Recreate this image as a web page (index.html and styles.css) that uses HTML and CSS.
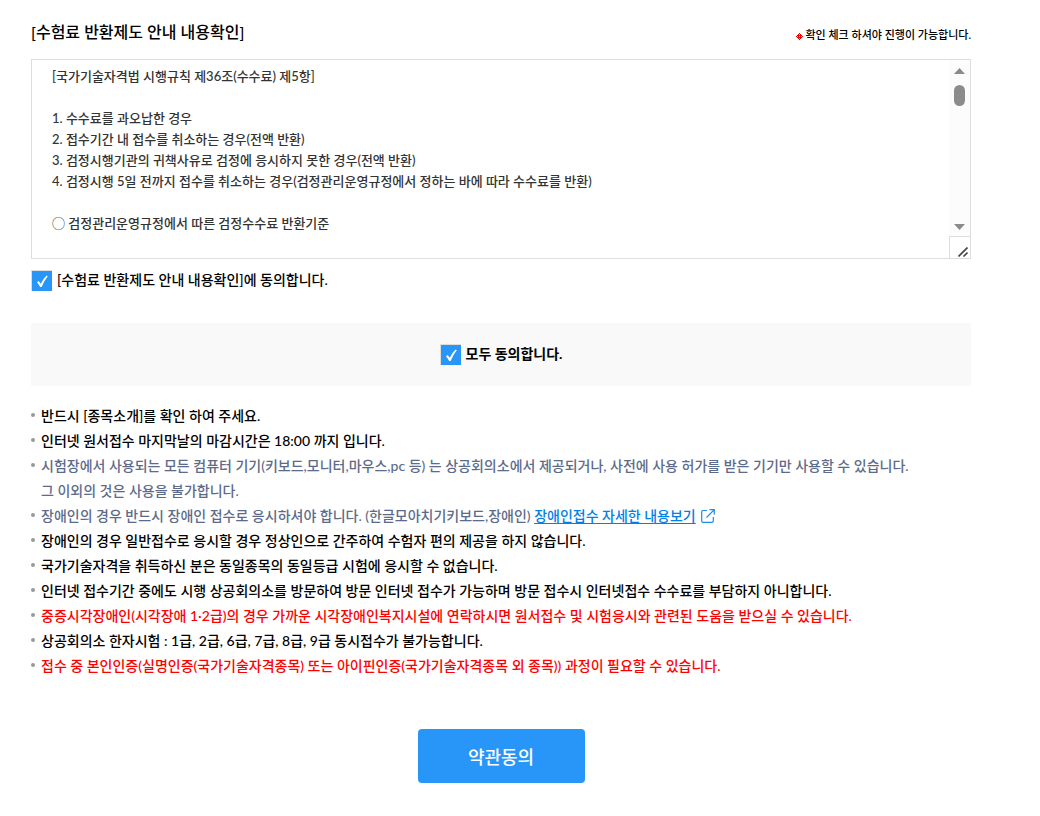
FILE: index.html
```html
<!DOCTYPE html>
<html lang="ko">
<head>
    <meta charset="UTF-8">
    <meta name="viewport" content="width=device-width, initial-scale=1.0">
    <title>약관동의</title>
    <link rel="stylesheet" href="styles.css">
</head>
<body>
    <form class="agree-form">
        <div class="title-row">
            <h1 id="refundTitle">[수험료 반환제도 안내 내용확인]</h1>
            <p class="title-note">
                <svg class="note-mark" width="7" height="7" viewBox="0 0 7 7" aria-hidden="true">
                    <path d="M3 0h1v1h1v1h1v1h1v1h-1v1h-1v1h-1v1h-1v-1h-1v-1h-1v-1h-1v-1h1v-1h1v-1h1z" fill="#e00"/>
                    <path d="M3 1h1v1H3zM1 3h1v1H1zM3 3h1v1H3zM5 3h1v1H5zM3 5h1v1H3z" fill="#fbb"/>
                </svg>
                확인 체크 하셔야 진행이 가능합니다.
            </p>
        </div>

        <div class="terms-box">
            <textarea class="terms-text" aria-labelledby="refundTitle" readonly>
[국가기술자격법 시행규칙 제36조(수수료) 제5항]

1. 수수료를 과오납한 경우
2. 접수기간 내 접수를 취소하는 경우(전액 반환)
3. 검정시행기관의 귀책사유로 검정에 응시하지 못한 경우(전액 반환)
4. 검정시행 5일 전까지 접수를 취소하는 경우(검정관리운영규정에서 정하는 바에 따라 수수료를 반환)

◯ 검정관리운영규정에서 따른 검정수수료 반환기준</textarea>
            <div class="terms-side" aria-hidden="true">
                <div class="scroll-bar">
                    <svg width="11" height="6" viewBox="0 0 11 6"><path d="M5.5 0L11 6H0Z" fill="#8b8b8b"/></svg>
                    <span class="scroll-thumb"></span>
                    <svg class="scroll-down" width="11" height="6" viewBox="0 0 11 6"><path d="M0 0H11L5.5 6Z" fill="#8b8b8b"/></svg>
                </div>
                <div class="resizer">
                    <svg width="10" height="10" viewBox="0 0 10 10"><path d="M0.5 9.5L9.5 0.5M5.5 9.5L9.5 5.5" stroke="#444" stroke-width="1.6"/></svg>
                </div>
            </div>
        </div>

        <div class="check-row">
            <input type="checkbox" id="agreeRefund" checked>
            <label for="agreeRefund">[수험료 반환제도 안내 내용확인]에 동의합니다.</label>
        </div>

        <div class="check-row check-all">
            <input type="checkbox" id="agreeAll" checked>
            <label for="agreeAll">모두 동의합니다.</label>
        </div>

        <ul class="notice">
            <li>반드시 [종목소개]를 확인 하여 주세요.</li>
            <li>인터넷 원서접수 마지막날의 마감시간은 18:00 까지 입니다.</li>
            <li class="sub">시험장에서 사용되는 모든 컴퓨터 기기(키보드,모니터,마우스,pc 등) 는 상공회의소에서 제공되거나, 사전에 사용 허가를 받은 기기만 사용할 수 있습니다.<br>그 이외의 것은 사용을 불가합니다.</li>
            <li class="sub">장애인의 경우 반드시 장애인 접수로 응시하셔야 합니다. (한글모아치기키보드,장애인)
                <a href="#">장애인접수 자세한 내용보기</a>
                <svg class="link-icon" width="14" height="14" viewBox="0 0 14 14" aria-hidden="true"><path d="M6 1.5H2Q0.7 1.5 0.7 2.8V12Q0.7 13.3 2 13.3H11Q12.3 13.3 12.3 12V8M8.5 0.7H13.3V5.5M13.3 0.7L5.5 8.5" fill="none" stroke="#1a8ceb" stroke-width="1.2"/></svg>
            </li>
            <li>장애인의 경우 일반접수로 응시할 경우 정상인으로 간주하여 수험자 편의 제공을 하지 않습니다.</li>
            <li>국가기술자격을 취득하신 분은 동일종목의 동일등급 시험에 응시할 수 없습니다.</li>
            <li>인터넷 접수기간 중에도 시행 상공회의소를 방문하여 방문 인터넷 접수가 가능하며 방문 접수시 인터넷접수 수수료를 부담하지 아니합니다.</li>
            <li class="warn">중증시각장애인(시각장애 1·2급)의 경우 가까운 시각장애인복지시설에 연락하시면 원서접수 및 시험응시와 관련된 도움을 받으실 수 있습니다.</li>
            <li>상공회의소 한자시험 : 1급, 2급, 6급, 7급, 8급, 9급 동시접수가 불가능합니다.</li>
            <li class="warn">접수 중 본인인증(실명인증(국가기술자격종목) 또는 아이핀인증(국가기술자격종목 외 종목)) 과정이 필요할 수 있습니다.</li>
        </ul>

        <button type="submit">약관동의</button>
    </form>
</body>
</html>
```
FILE: styles.css
```css
* {
    box-sizing: border-box;
}
body {
    margin: 0;
    padding: 20px 69px 32px 31px;
    font-family: Lato, "Noto Sans CJK KR", sans-serif;
    font-size: 14px;
    font-weight: 500;
    color: #000;
    background-color: #fff;
}
.agree-form {
    display: flex;
    flex-direction: column;
}
.title-row {
    display: flex;
    justify-content: space-between;
    align-items: flex-end;
    margin-bottom: 15px;
}
h1 {
    margin: 0;
    font-size: 16px;
    font-weight: 500;
    line-height: 24px;
}
.title-note {
    display: flex;
    align-items: center;
    gap: 2px;
    margin: 0;
    font-size: 11px;
    line-height: 18px;
}
.note-mark {
    margin-top: 2px;
}
.terms-box {
    display: flex;
    height: 200px;
    border: 1px solid #ddd;
}
.terms-text {
    flex: 1;
    padding: 6px 20px;
    border: 0;
    outline: 0;
    resize: none;
    overflow: hidden;
    font: inherit;
    font-size: 13px;
    line-height: 21px;
    color: #333;
}
.terms-side {
    display: flex;
    flex-direction: column;
    width: 21px;
}
.scroll-bar {
    display: flex;
    flex: 1;
    flex-direction: column;
    align-items: center;
    padding: 8px 0 6px;
    background-color: #fcfcfc;
}
.scroll-thumb {
    width: 11px;
    height: 21px;
    margin-top: 11px;
    border-radius: 6px;
    background-color: #8b8b8b;
}
.scroll-down {
    margin-top: auto;
}
.resizer {
    display: flex;
    justify-content: flex-end;
    align-items: flex-end;
    height: 22px;
    padding: 1px 2px;
    border-top: 1px solid #ddd;
    border-left: 1px solid #ddd;
}
.check-row {
    display: flex;
    align-items: center;
    gap: 5px;
    margin-top: 11px;
    line-height: 20px;
}
.check-row input {
    appearance: none;
    width: 21px;
    height: 21px;
    margin: 0;
    border: 1px solid #ddd;
    border-width: 1px 0 0 1px;
    background: #2896f8 url("data:image/svg+xml,%3Csvg xmlns='http://www.w3.org/2000/svg' viewBox='0 0 20 20'%3E%3Cpath d='M5 11.2L6.6 10L8.8 12.8Q11 8 14.6 4.6L15.8 5.2Q12 9.8 9.6 16H8.2Q6.9 13.3 5 11.2Z' fill='%23fff'/%3E%3C/svg%3E") center / 20px no-repeat;
}
.check-row label {
    padding-bottom: 1px;
}
.check-all {
    justify-content: center;
    height: 63px;
    margin-top: 32px;
    background-color: #f9f9f9;
    font-weight: 700;
}
.notice {
    margin: 17px 0 0;
    padding: 0;
    list-style: none;
    line-height: 25px;
}
.notice li {
    position: relative;
    padding-left: 10px;
}
.notice li::before {
    content: "";
    position: absolute;
    top: 10px;
    left: 0;
    width: 4px;
    height: 4px;
    border-radius: 50%;
    background-color: #999;
}
.notice .sub {
    color: #5d6b8a;
}
.notice .warn {
    color: #f00;
}
.notice a {
    color: #0080e8;
    text-underline-offset: 2px;
}
.link-icon {
    margin-left: 2px;
    vertical-align: -2px;
}
button {
    align-self: center;
    width: 167px;
    height: 54px;
    margin-top: 51px;
    border: 0;
    border-radius: 4px;
    background-color: #2896f8;
    color: #fff;
    font: inherit;
    font-size: 18px;
    cursor: pointer;
}
```
